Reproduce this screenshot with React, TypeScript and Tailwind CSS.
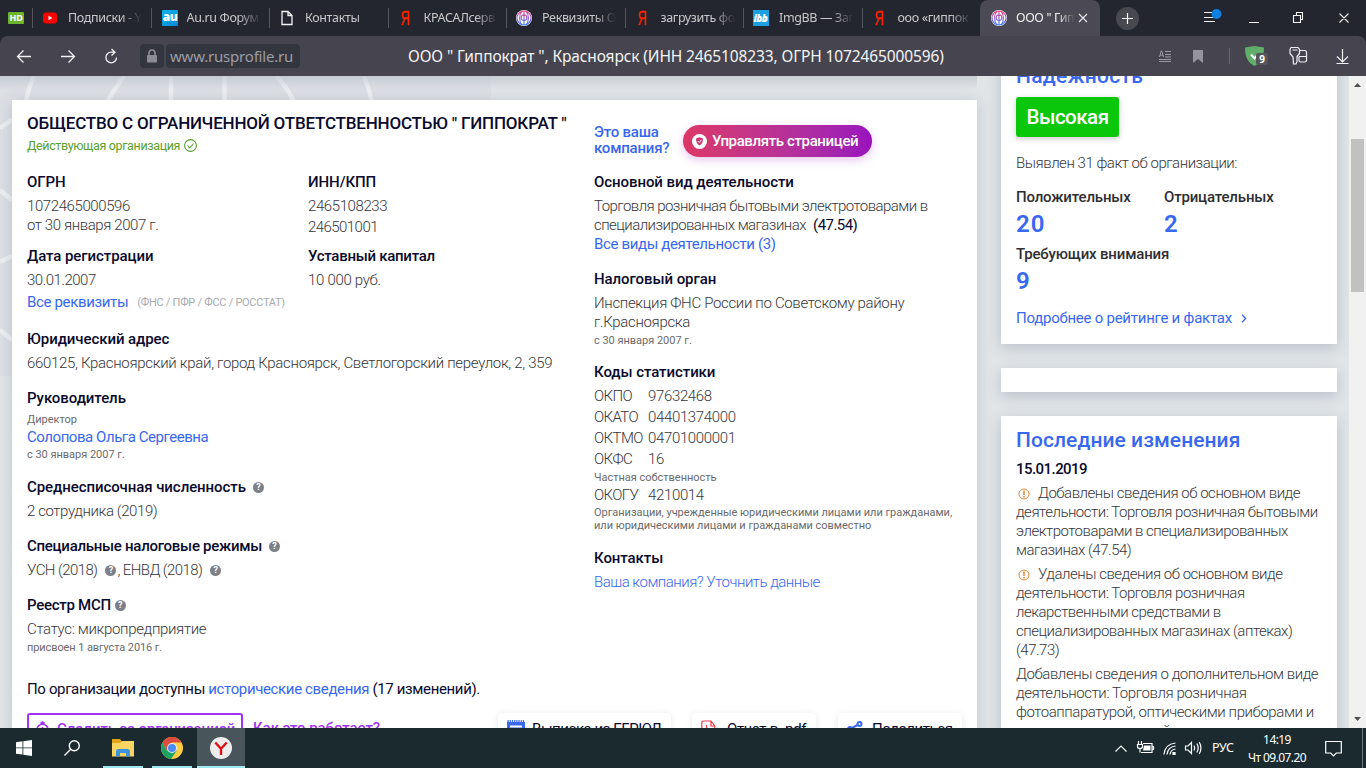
import type { ReactNode } from "react";
import clsx from "clsx";

type Favicon = "youtube" | "au" | "page" | "yandex" | "rus" | "ibb";

interface Tab {
  icon: Favicon;
  title: string;
}

const TABS: Tab[] = [
  { icon: "youtube", title: "Подписки - Y" },
  { icon: "au", title: "Au.ru Форум" },
  { icon: "page", title: "Контакты" },
  { icon: "yandex", title: "КРАСАЛсерв" },
  { icon: "rus", title: "Реквизиты О" },
  { icon: "yandex", title: "загрузить фо" },
  { icon: "ibb", title: "ImgBB — Заг" },
  { icon: "yandex", title: "ооо «гиппок" },
];

const CODES = [
  { name: "ОКПО", value: "97632468" },
  { name: "ОКАТО", value: "04401374000" },
  { name: "ОКТМО", value: "04701000001" },
  { name: "ОКФС", value: "16", note: ["Частная собственность"] },
  {
    name: "ОКОГУ",
    value: "4210014",
    note: ["Организации, учрежденные юридическими лицами или гражданами,", "или юридическими лицами и гражданами совместно"],
  },
];

const CHANGES = [
  {
    warn: true,
    lines: [
      "Добавлены сведения об основном виде",
      "деятельности: Торговля розничная бытовыми",
      "электротоварами в специализированных",
      "магазинах (47.54)",
    ],
  },
  {
    warn: true,
    lines: [
      "Удалены сведения об основном виде",
      "деятельности: Торговля розничная",
      "лекарственными средствами в",
      "специализированных магазинах (аптеках)",
      "(47.73)",
    ],
  },
  {
    warn: false,
    lines: [
      "Добавлены сведения о дополнительном виде",
      "деятельности: Торговля розничная",
      "фотоаппаратурой, оптическими приборами и",
      "средствами измерений",
    ],
  },
];

function TabIcon({ icon }: { icon: Favicon }) {
  switch (icon) {
    case "youtube":
      return (
        <svg width="14" height="12" viewBox="0 0 14 12">
          <rect width="14" height="11" y="0.5" rx="3" fill="#f00" />
          <path d="M5.5 3.7v4.6L9.3 6z" fill="#fff" />
        </svg>
      );
    case "au":
      return (
        <span className="flex h-4 w-4 items-center justify-center rounded-[1px] bg-gradient-to-br from-[#10b5ea] to-[#0a86d8] pb-0.5 font-['Open_Sans',sans-serif] text-[12px] leading-4 font-extrabold tracking-[-0.5px] text-white">
          au
        </span>
      );
    case "page":
      return (
        <svg width="12" height="16" viewBox="0 0 12 16" fill="none" stroke="#f2f2f2" strokeWidth="1.3">
          <path d="M1 1.5h6l4 4v9H1zM7 1.5v4h4" />
        </svg>
      );
    case "yandex":
      return (
        <span className="w-4 text-center font-['Liberation_Sans',sans-serif] text-[21px] leading-4 text-[#ff2400]">
          <span className="inline-block scale-x-[0.6] [-webkit-text-stroke:0.5px_#ff2400]">Я</span>
        </span>
      );
    case "rus":
      return (
        <svg width="16" height="16" viewBox="0 0 16 16">
          <defs>
            <linearGradient id="rus" x1="0" y1="0" x2="0" y2="1">
              <stop offset="0" stopColor="#f0387c" />
              <stop offset="0.5" stopColor="#8a52c8" />
              <stop offset="1" stopColor="#2f7cf5" />
            </linearGradient>
          </defs>
          <circle cx="8" cy="8" r="8" fill="#fff" />
          <g fill="none" stroke="url(#rus)" strokeWidth="1.1">
            <circle cx="8" cy="8" r="7" />
            <path d="M8.01 1v14M5.6 1.6C3 4.5 3 11.5 5.6 14.4M10.4 1.6C13 4.5 13 11.5 10.4 14.4M8 5.5C6 4.5 5 6 5.2 8c.2 2 1.5 2.5 2.8 2M8 5.5c2-1 3 .5 2.8 2.5-.2 2-1.5 2.5-2.8 2" />
          </g>
        </svg>
      );
    case "ibb":
      return (
        <span className="flex h-4 w-4 items-center justify-center bg-[#1ba0e2] font-['Open_Sans',sans-serif] text-[10px] leading-4 font-extrabold tracking-[-0.5px] text-white italic">
          ibb
        </span>
      );
  }
}

function TabBar() {
  return (
    <div className="flex h-9 shrink-0 bg-[#24262f] font-['Noto_Sans',sans-serif] text-[12.5px] tracking-[-0.35px] text-[#c9c9cb]">
      <div className="flex w-8 items-center pl-2">
        <span className="flex h-3 w-4 items-center justify-center rounded-[1px] bg-[#6cb52d] text-[9px] leading-3 font-bold tracking-[-0.3px] text-white">
          HD
        </span>
      </div>
      {TABS.map((tab) => (
        <div key={tab.title} className="flex w-[118.5px] shrink-0 items-center">
          <span className="h-5 w-px bg-[#55565e]" />
          <span className={clsx("flex w-[35px] shrink-0 justify-center", tab.icon !== "au" && "pr-0.5", tab.icon === "au" && "pl-0.5")}>
            <TabIcon icon={tab.icon} />
          </span>
          <span className="w-[74px] overflow-hidden whitespace-nowrap [mask-image:linear-gradient(to_right,#000_70%,transparent)]">
            {tab.title}
          </span>
        </div>
      ))}
      <div className="flex w-[120px] items-center rounded-t-lg bg-[#4b4a54] pl-[11px] text-[#eee]">
        <TabIcon icon="rus" />
        <span className="ml-[9px] w-[60px] overflow-hidden whitespace-nowrap [mask-image:linear-gradient(to_right,#000_70%,transparent_98%)]">
          ООО " Гиппократ
        </span>
        <svg className="ml-0.5" width="10" height="10" viewBox="0 0 10 10" stroke="#e8e8e8" strokeWidth="1.1">
          <path d="M1 1l8 8M9 1l-8 8" />
        </svg>
      </div>
      <div className="flex w-[54px] items-center justify-center">
        <span className="flex h-[23px] w-[23px] items-center justify-center rounded-full bg-[#484850]">
          <svg width="11" height="11" viewBox="0 0 11 11" stroke="#fff" strokeWidth="1.2">
            <path d="M5.5 0v11M0 5.5h11" />
          </svg>
        </span>
      </div>
      <svg className="ml-auto" width="212" height="36" viewBox="1154 0 212 36" fill="none" stroke="#f2f2f2" strokeWidth="1.1">
        <path d="M1204 12.5h9M1204 17.5h11M1204 21.5h11" />
        <circle cx="1216.5" cy="14" r="5" fill="#0f7fe0" stroke="none" />
        <path d="M1249 22.5h10M1293.5 15.5h7v7h-7zM1296.5 15v-2.5h6v7h-2M1339.5 13.5l9 9M1348.5 13.5l-9 9" />
      </svg>
    </div>
  );
}

function Toolbar() {
  return (
    <div className="shrink-0 bg-[#24262f]">
      <div className="flex h-10 items-center rounded-t-lg bg-[#46454f] font-['Noto_Sans',sans-serif]">
        <svg width="140" height="40" viewBox="0 0 140 40" fill="none" stroke="#f0f0f2" strokeWidth="1.3">
          <path d="M31 20.5H17.5M23.5 14.5l-6 6 6 6M61 20.5h13.5M68.5 14.5l6 6-6 6" />
          <path d="M116.5 21.5a5.3 5.3 0 1 1-5.3-5.3h3.3M111.5 13l3.5 3.2-3.5 3.3" />
        </svg>
        <span className="flex h-6 w-6 items-center justify-center rounded bg-[#34363f]">
          <svg width="12" height="14" viewBox="0 0 12 14">
            <rect x="1" y="6" width="10" height="7.5" rx="1" fill="#8b8c95" />
            <path d="M3 6.5V4a3 3 0 0 1 6 0v2.5" fill="none" stroke="#8b8c95" strokeWidth="1.6" />
          </svg>
        </span>
        <span className="ml-0.5 flex h-6 w-[134px] items-center rounded bg-[#34363f] pl-1 text-[15px] tracking-[-0.2px] text-[#9c9da5]">
          www.rusprofile.ru
        </span>
        <span className="mt-0.5 ml-[108px] w-[560px] text-[15.5px] tracking-[-0.12px] whitespace-nowrap text-[#f4f4f5]">
          ООО " Гиппократ ", Красноярск (ИНН 2465108233, ОГРН 1072465000596)
        </span>
        <div className="relative ml-auto">
          <svg width="212" height="40" viewBox="1154 36 212 40" fill="none">
            <path
              d="M1159 59.5h12M1159 61.5h12M1165 51.5h6M1165 54.5h6M1165 57h6M1159.5 57l1.700-6h.6l1.700 6M1160.2 55.2h2.6"
              stroke="#9c9ca3"
            />
            <path d="M1193 50h10v13l-5-4-5 4z" fill="#94949b" />
            <path d="M1229.5 48v16" stroke="#66666e" />
            <path d="M1245 47.5l9.5-1.5 9.5 1.5c0 9-2.5 15-9.5 18.5-7-3.500-9.500-9.500-9.500-18.500z" fill="#5fae6a" />
            <path d="M1251 54.5l3.500 4 4-5" stroke="#fff" strokeWidth="2" />
            <g stroke="#f0f0f2" strokeWidth="1.2">
              <path d="M1291 47.500h7l1.500 2v4l-2.500 3v5l-1 2.500h-2.500l-.5-7-3-3.500v-4z" />
              <path d="M1300 50.500h4.500q2 0 2 2v8q0 1.500-2 1.500h-4q-1.500 0-1.500-1.500v-4M1299 56.500h7.500M1292.500 50h5" />
              <path d="M1342.500 49v13M1337 56.500l5.500 5.500 5.500-5.500M1336.500 63.500h12" />
            </g>
          </svg>
          <span className="absolute top-[17px] left-[102px] h-3 w-3 rounded-[2px] bg-[#55545c] text-center text-[10px] leading-3 font-bold text-white">
            9
          </span>
        </div>
      </div>
    </div>
  );
}

function Help({ className }: { className?: string }) {
  return (
    <span
      className={clsx(
        "inline-flex h-[11px] w-[11px] shrink-0 items-center justify-center rounded-full bg-[#7d8088] text-[9px] leading-[11px] font-bold tracking-normal text-white",
        className
      )}
    >
      ?
    </span>
  );
}

interface SectionProps {
  title: string;
  help?: string;
  tight?: boolean;
  className?: string;
  children: ReactNode;
}

function Section({ title, help, tight, className, children }: SectionProps) {
  return (
    <section className={className}>
      <h2
        className={clsx(
          "mb-[5px] flex h-5 items-center text-[15px] leading-5 font-medium whitespace-nowrap text-[#0a0a2d]",
          tight ? "tracking-[-0.27px]" : "tracking-[-0.07px]"
        )}
      >
        {title}
        {help && <Help className={help} />}
      </h2>
      {children}
    </section>
  );
}

function Small({ children, className }: { children: ReactNode; className?: string }) {
  return <p className={clsx("text-[11px] font-normal tracking-[-0.02px] text-[#6a6a6c]", className)}>{children}</p>;
}

function Requisites() {
  return (
    <div className="w-[566px]">
      <h1 className="-mt-px mb-px text-[17px] leading-6 font-medium tracking-[-0.2px] whitespace-nowrap text-[#0a0a2d]">
        ОБЩЕСТВО С ОГРАНИЧЕННОЙ ОТВЕТСТВЕННОСТЬЮ " ГИППОКРАТ "
      </h1>
      <p className="mb-[17px] flex h-[19px] items-center text-[12.5px] font-normal tracking-[-0.36px] text-[#5aa02c]">
        Действующая организация
        <svg className="ml-1" width="13" height="13" viewBox="0 0 13 13" fill="none" stroke="#5aa02c" strokeWidth="1.1">
          <circle cx="6.5" cy="6.5" r="5.9" />
          <path d="M3.5 6.5l2.3 2.5 3.7-4.5" />
        </svg>
      </p>

      <div className="flex">
        <Section title="ОГРН" className="w-[281px]">
          <p className="tracking-[-0.4px]">1072465000596</p>
          <p className="tracking-[-0.4px]">от 30 января 2007 г.</p>
        </Section>
        <Section title="ИНН/КПП">
          <p className="tracking-[-0.4px]">2465108233</p>
          <p className="mt-0.5 tracking-[-0.55px]">246501001</p>
        </Section>
      </div>
      <div className="mt-[9px] flex">
        <Section title="Дата регистрации" className="w-[281px]">
          <p className="tracking-[-0.5px]">30.01.2007</p>
          <p className="mt-[3px] flex items-center whitespace-nowrap">
            <a className="font-normal text-[#3867f0]">Все реквизиты</a>
            <span className="ml-[9px] text-[11px] font-normal tracking-[-0.27px] text-[#a9abae]">(ФНС / ПФР / ФСС / РОССТАТ)</span>
          </p>
        </Section>
        <Section title="Уставный капитал" tight>
          <p className="tracking-[-0.3px]">10 000 руб.</p>
        </Section>
      </div>
      <Section title="Юридический адрес" className="mt-[17px]">
        <p className="tracking-[-0.31px] whitespace-nowrap">
          660125, Красноярский край, город Красноярск, Светлогорский переулок, 2, 359
        </p>
      </Section>
      <Section title="Руководитель" className="mt-[15px]">
        <Small className="leading-[14px]">Директор</Small>
        <p className="pt-px font-normal tracking-[-0.45px] text-[#3867f0]">Солопова Ольга Сергеевна</p>
        <Small className="leading-4">с 30 января 2007 г.</Small>
      </Section>
      <Section title="Среднесписочная численность" help="ml-[7px]" className="mt-3.5">
        <p className="tracking-[-0.4px]">2 сотрудника (2019)</p>
      </Section>
      <Section title="Специальные налоговые режимы" help="ml-[7px]" tight className="mt-[15px]">
        <p className="flex items-center tracking-[-0.58px]">
          УСН (2018)
          <Help className="mr-px ml-2" />, ЕНВД (2018)
          <Help className="ml-2" />
        </p>
      </Section>
      <Section title="Реестр МСП" help="ml-1" tight className="mt-[15px]">
        <p className="tracking-[-0.33px]">Статус: микропредприятие</p>
        <Small className="mt-px leading-[15px] !tracking-[-0.1px]">присвоен 1 августа 2016 г.</Small>
      </Section>
    </div>
  );
}

function Activity() {
  return (
    <div className="pt-3 pl-px">
      <div className="mb-4 flex h-8 items-center">
        <p className="w-[89px] text-[15px] leading-4 font-medium tracking-[-0.2px] text-[#3867f0]">
          Это ваша компания?
        </p>
        <button className="mt-0.5 flex h-8 w-[189px] items-center rounded-full bg-gradient-to-r from-[#dc3766] to-[#9a10bd] pl-[9px] text-[15px] font-medium tracking-[-0.37px] whitespace-nowrap text-white shadow-[0_3px_10px_rgba(160,30,190,0.25)]">
          <svg className="mr-[5px]" width="15" height="15" viewBox="0 0 15 15">
            <circle cx="7.5" cy="7.5" r="7.5" fill="#fff" />
            <path d="M4 4.6l3.500-1.400 3.500 1.400c0 3.500-.9 5.600-3.500 6.900-2.600-1.300-3.500-3.400-3.500-6.900z" fill="#cf3474" />
            <path d="M5.8 7l1.400 1.500 2.300-2.600" fill="none" stroke="#fff" />
          </svg>
          Управлять страницей
        </button>
      </div>
      <Section title="Основной вид деятельности">
        <p className="tracking-[-0.55px] whitespace-nowrap">
          Торговля розничная бытовыми электротоварами в
          <br />
          специализированных магазинах{" "}
          <span className="pl-1 font-normal text-[#0a0a2d]">(47.54)</span>
        </p>
        <p className="font-normal tracking-[-0.36px] text-[#3867f0]">Все виды деятельности (3)</p>
      </Section>
      <Section title="Налоговый орган" className="mt-[15px]">
        <p className="tracking-[-0.33px] whitespace-nowrap">
          Инспекция ФНС России по Советскому району
          <br />
          г.Красноярска
        </p>
        <Small className="mt-px leading-[15px]">с 30 января 2007 г.</Small>
      </Section>
      <Section title="Коды статистики" className="mt-3.5">
        <div className="-mt-px">
          {CODES.map((code) => (
            <div key={code.name}>
              <p className="flex leading-[21px]">
                <span className="w-[54px] tracking-[-0.6px]">{code.name}</span>
                <span className="tracking-[-0.35px]">{code.value}</span>
              </p>
              {code.note?.map((line) => (
                <Small key={line} className={clsx("whitespace-nowrap", code.note.length > 1 ? "leading-[13px]" : "leading-[15px]")}>
                  {line}
                </Small>
              ))}
            </div>
          ))}
        </div>
      </Section>
      <Section title="Контакты" className="mt-4">
        <p className="tracking-[-0.5px] text-[#3867f0]">Ваша компания? Уточнить данные</p>
      </Section>
    </div>
  );
}

function ActionCard({ icon, children, className }: { icon: ReactNode; children: ReactNode; className: string }) {
  return (
    <span
      className={clsx(
        "flex h-8 items-center rounded-sm bg-white font-normal whitespace-nowrap text-[#0a0a2d] shadow-[0_1px_6px_rgba(30,60,90,0.12)]",
        className
      )}
    >
      {icon}
      {children}
    </span>
  );
}

function Actions() {
  return (
    <div className="mt-3.5 flex text-[15px]">
      <span className="flex h-8 w-[216px] items-center rounded-[3px] border-2 border-[#a033f5] pl-[7px] font-medium tracking-[-0.15px] whitespace-nowrap text-[#a033f5]">
        <svg className="mr-2 shrink-0" width="13" height="17" viewBox="0 0 13 17" fill="none" stroke="#a033f5" strokeWidth="1.6">
          <path d="M4.5 2.500L6.500 1l2 1.500M6.500 6v5M4 8.500h5" />
          <circle cx="6.5" cy="8.700" r="5.500" />
        </svg>
        Следить за организацией
      </span>
      <span className="ml-2.5 w-[245px] leading-[30px] font-medium tracking-[-0.06px] text-[#a033f5]">Как это работает?</span>
      <ActionCard
        className="w-[173px] pl-[9px] tracking-[-0.45px]"
        icon={
          <svg className="mr-[7px]" width="18" height="18" viewBox="0 0 18 18">
            <path d="M0 2h18v15H0z" fill="#3867f0" />
            <path d="M.5 1h17" stroke="#3867f0" strokeWidth="2" strokeDasharray="1.2 1" />
            <path d="M3 6.500h12" stroke="#fff" strokeWidth="2" />
          </svg>
        }
      >
        Выписка из ЕГРЮЛ
      </ActionCard>
      <ActionCard
        className="ml-[21px] w-[124px] pl-[9px] tracking-[-0.3px]"
        icon={
          <svg className="mr-[11px]" width="15" height="18" viewBox="0 0 15 18" fill="none" stroke="#f43b4e" strokeWidth="1.2">
            <path d="M10 1H3Q.8 1 .8 3v12q0 2 2 2h9q2 0 2-2V6zM10 1v5h4M5.500 12V5" />
          </svg>
        }
      >
        Отчет в .pdf
      </ActionCard>
      <ActionCard
        className="ml-[22px] w-[124px] pl-[9px] tracking-[-0.4px]"
        icon={
          <svg className="mr-[9px]" width="16" height="16" viewBox="0 0 16 16" fill="none" stroke="#3867f0" strokeWidth="2">
            <circle cx="12.5" cy="3" r="2" />
            <circle cx="3" cy="8" r="2" />
            <circle cx="12.5" cy="13" r="2" />
            <path d="M5 7l5.500-3M5 9l5.500 3" />
          </svg>
        }
      >
        Поделиться
      </ActionCard>
    </div>
  );
}

function Stat({ label, value }: { label: string; value: string }) {
  return (
    <div className="h-[57px] w-[148px] whitespace-nowrap">
      <p className="text-[15px] leading-5 font-medium tracking-[-0.17px] text-[#2e2e33]">{label}</p>
      <p className="mt-[3px] text-[24px] leading-7 font-semibold tracking-[1px] text-[#3867f0]">{value}</p>
    </div>
  );
}

function Sidebar() {
  const card = "bg-white px-[15px] shadow-[0_4px_14px_rgba(60,75,100,0.24)]";
  return (
    <aside className="-mt-6 flex w-[336px] shrink-0 flex-col gap-6">
      <div className={clsx(card, "h-[292px] pt-2.5")}>
        <h2 className="text-[21px] leading-7 font-medium tracking-[0.25px] text-[#3867f0]">Надежность</h2>
        <span className="mt-[7px] block h-10 w-[103px] rounded-[3px] bg-[#0bc70b] text-center text-[20.5px] leading-10 font-medium tracking-[-0.5px] text-white shadow-[0_2px_6px_rgba(0,0,0,0.2)]">
          Высокая
        </span>
        <p className="mt-[17px] tracking-[-0.47px]">Выявлен 31 факт об организации:</p>
        <div className="mt-3.5 flex flex-wrap">
          <Stat label="Положительных" value="20" />
          <Stat label="Отрицательных" value="2" />
          <Stat label="Требующих внимания" value="9" />
        </div>
        <p className="mt-[7px] flex items-center leading-5 font-normal tracking-[-0.25px] text-[#3867f0]">
          Подробнее о рейтинге и фактах
          <svg className="mt-px ml-[9px]" width="6" height="9" viewBox="0 0 6 9" fill="none" stroke="#3867f0" strokeWidth="1.3">
            <path d="M1 .8l3.700 3.700L1 8.200" />
          </svg>
        </p>
      </div>
      <div className={clsx(card, "h-6")} />
      <div className={clsx(card, "h-[400px] pt-2.5")}>
        <h2 className="text-[21px] leading-7 font-medium tracking-[0.07px] text-[#3867f0]">Последние изменения</h2>
        <p className="mt-[5px] mb-[5px] text-[15px] leading-5 font-medium tracking-[-0.55px] text-[#0a0a2d]">15.01.2019</p>
        {CHANGES.map((change) => (
          <div key={change.lines[0]} className="mb-[5px]">
            {change.lines.map((line, i) => (
              <p key={line} className={clsx("flex items-center whitespace-nowrap", change.warn ? "tracking-[-0.48px]" : "tracking-[-0.42px]")}>
                {change.warn && i === 0 && (
                  <svg className="mr-[8px] ml-0.5" width="12" height="12" viewBox="0 0 12 12" fill="none" stroke="#e38a3a">
                    <circle cx="6" cy="6" r="5" />
                    <path d="M6 2.500V7M6 8v1.500" strokeWidth="1.600" />
                  </svg>
                )}
                {line}
              </p>
            ))}
          </div>
        ))}
      </div>
    </aside>
  );
}

function Scrollbar() {
  return (
    <div className="flex w-[17px] shrink-0 flex-col items-center justify-between bg-[#f1f1f1] py-1.5">
      <div className="flex flex-col items-center">
        <svg width="7" height="4" viewBox="0 0 7 4" className="mt-px">
          <path d="M0 4L3.500 0 7 4z" fill="#505050" />
        </svg>
        <div className="mt-[52px] h-[153px] w-[13px] bg-[#c1c1c1]" />
      </div>
      <svg width="7" height="4" viewBox="0 0 7 4" className="mb-px">
        <path d="M0 0l3.500 4L7 0z" fill="#505050" />
      </svg>
    </div>
  );
}

function Taskbar() {
  return (
    <div className="flex h-10 shrink-0 bg-[#1a2a2f] font-['Noto_Sans',sans-serif] text-white">
      <div className="flex w-12 items-center justify-center">
        <svg width="16" height="16" viewBox="0 0 16 16" fill="#fff">
          <path d="M0 2.300L6.500 1.300v6.200H0zM7.300 1.200L16 0v7.500H7.300zM0 8.300h6.500v6.300L0 13.700zM7.300 8.300H16V16l-8.700-1.200z" />
        </svg>
      </div>
      <div className="flex w-12 items-center justify-center">
        <svg width="16" height="16" viewBox="0 0 16 16" fill="none" stroke="#fff" strokeWidth="1.4">
          <circle cx="10.3" cy="5.700" r="5" />
          <path d="M6.700 9.300L.5 15.500" />
        </svg>
      </div>
      <div className="ml-[7px] flex w-10 items-center justify-center border-b-2 border-[#9fe8f2] pt-0.5">
        <svg width="22" height="18" viewBox="0 0 22 18">
          <path d="M0 0h8l1.500 2H22v15H0z" fill="#e3a418" />
          <path d="M0 4h8.500l1.500-2H22v15.500H0z" fill="#fcd462" />
          <path d="M4 17.500v-5Q4 10 6 10h10q2 0 2 2.500v5h-4V14H8v3.500z" fill="#3b94dc" />
        </svg>
      </div>
      <div className="ml-[9px] flex w-10 items-center justify-center border-b-2 border-[#9fe8f2] pt-0.5">
        <svg width="22" height="22" viewBox="0 0 22 22">
          <circle cx="11" cy="11" r="11" fill="#ffcd42" />
          <path d="M1.500 5.500A11 11 0 0 0 10 22l5.800-8.300L11 11 6.200 13.700z" fill="#1ea362" />
          <path d="M1.500 5.500A11 11 0 0 1 20.500 5.500H11L6.200 13.700z" fill="#dc4b3e" />
          <circle cx="11" cy="11" r="5" fill="#f1f1f1" />
          <circle cx="11" cy="11" r="4" fill="#4a8af4" />
        </svg>
      </div>
      <div className="ml-[5px] flex w-12 items-center justify-center border-b-2 border-[#9fe8f2] bg-[#48555a] pt-0.5">
        <svg width="22" height="22" viewBox="0 0 22 22">
          <circle cx="11" cy="11" r="11" fill="#ececec" />
          <path d="M5.300 5.500l5.700 6.300 5.700-6.300M11 11.500V18" fill="none" stroke="#e01010" strokeWidth="2.300" />
        </svg>
      </div>
      <svg className="ml-auto" width="96" height="40" viewBox="1110 728 96 40" fill="none" stroke="#fff" strokeWidth="1.2">
        <path d="M1115.500 751.500l5.500-5.500 5.500 5.500" />
        <path d="M1143 743.500h9v9h-11M1152 746.500h1.500v3H1152M1138.500 741v3M1141.500 741v3M1137.500 744.500h5v2q0 2-2.500 2t-2.500-2zM1140 748.500v4" />
        <path d="M1144 745.500h6.500v5H1143z" fill="#fff" stroke="none" />
        <path d="M1164 754.500q1-10.500 11.500-11.500M1167 754.500q.8-7.500 8.500-8.500M1170 754.500q.5-4.800 5.500-5.500" />
        <path d="M1173 752.500h2v2h-2z" fill="#fff" />
        <path d="M1185.500 746v4h2.500l3.500 3.500v-11L1188 746zM1194 745.500q1.500 2.500 0 5M1196.800 743.500q2.800 4.500 0 9M1199.200 742q3.500 6 0 12" />
      </svg>
      <span className="ml-[6px] flex w-[36px] items-center text-[12.5px] tracking-[-0.3px]">РУС</span>
      <div className="flex w-[58px] flex-col items-center justify-center pt-px text-[12px] leading-[18px] tracking-[-0.58px] whitespace-nowrap">
        <span>14:19</span>
        <span>Чт 09.07.20</span>
      </div>
      <div className="flex w-[56px] items-center pl-[19px]">
        <svg width="17" height="17" viewBox="0 0 17 17" fill="none" stroke="#fff" strokeWidth="1.2">
          <path d="M.7 1.500h15.600v11.500h-5L8.500 15.800 5.700 13h-5z" />
        </svg>
      </div>
      <div className="mr-[3px] border-l border-[#6f7a7e]" />
    </div>
  );
}

export default function App() {
  return (
    <div className="flex h-[768px] w-[1366px] flex-col overflow-hidden">
      <TabBar />
      <Toolbar />
      <div className="flex min-h-0 flex-1">
        <main className="relative flex min-w-0 flex-1 overflow-hidden bg-[#e1e5e8] pl-3 font-[Roboto,sans-serif] text-[15px] leading-[19px] font-light tracking-[-0.35px] text-[#36363a]">
          <svg className="absolute top-0 left-0" width="494" height="300" viewBox="0 76 494 300" fill="none">
            <path d="M0 76h491v300H0z" fill="#dcdfe4" />
            <path
              d="M34 76q-5 10-8 26M124 76q-10 14-17 26M171 76v26M224.500 76v26M276 76q12 12 18 26M364 76q5 12 8 26M0 128l12-8M0 190l12 10M0 262l12-6M0 330l12 10"
              stroke="#eceef1"
              strokeWidth="4.5"
            />
          </svg>
          <div className="relative mt-6 mr-6 h-[640px] w-[965px] shrink-0 bg-white pt-3 pl-[15px] shadow-[0_2px_14px_rgba(60,75,100,0.2)]">
            <div className="flex">
              <Requisites />
              <Activity />
            </div>
            <p className="mt-6 leading-5 font-normal tracking-[-0.36px] text-[#0a0a2d]">
              По организации доступны <a className="text-[#3867f0]">исторические сведения</a> (17 изменений).
            </p>
            <Actions />
          </div>
          <div className="relative">
            <Sidebar />
          </div>
          <div className="absolute top-0 left-0 h-3.5 w-[977px] bg-gradient-to-b from-[#b9bec8]/60 to-transparent" />
        </main>
        <Scrollbar />
      </div>
      <Taskbar />
    </div>
  );
}
